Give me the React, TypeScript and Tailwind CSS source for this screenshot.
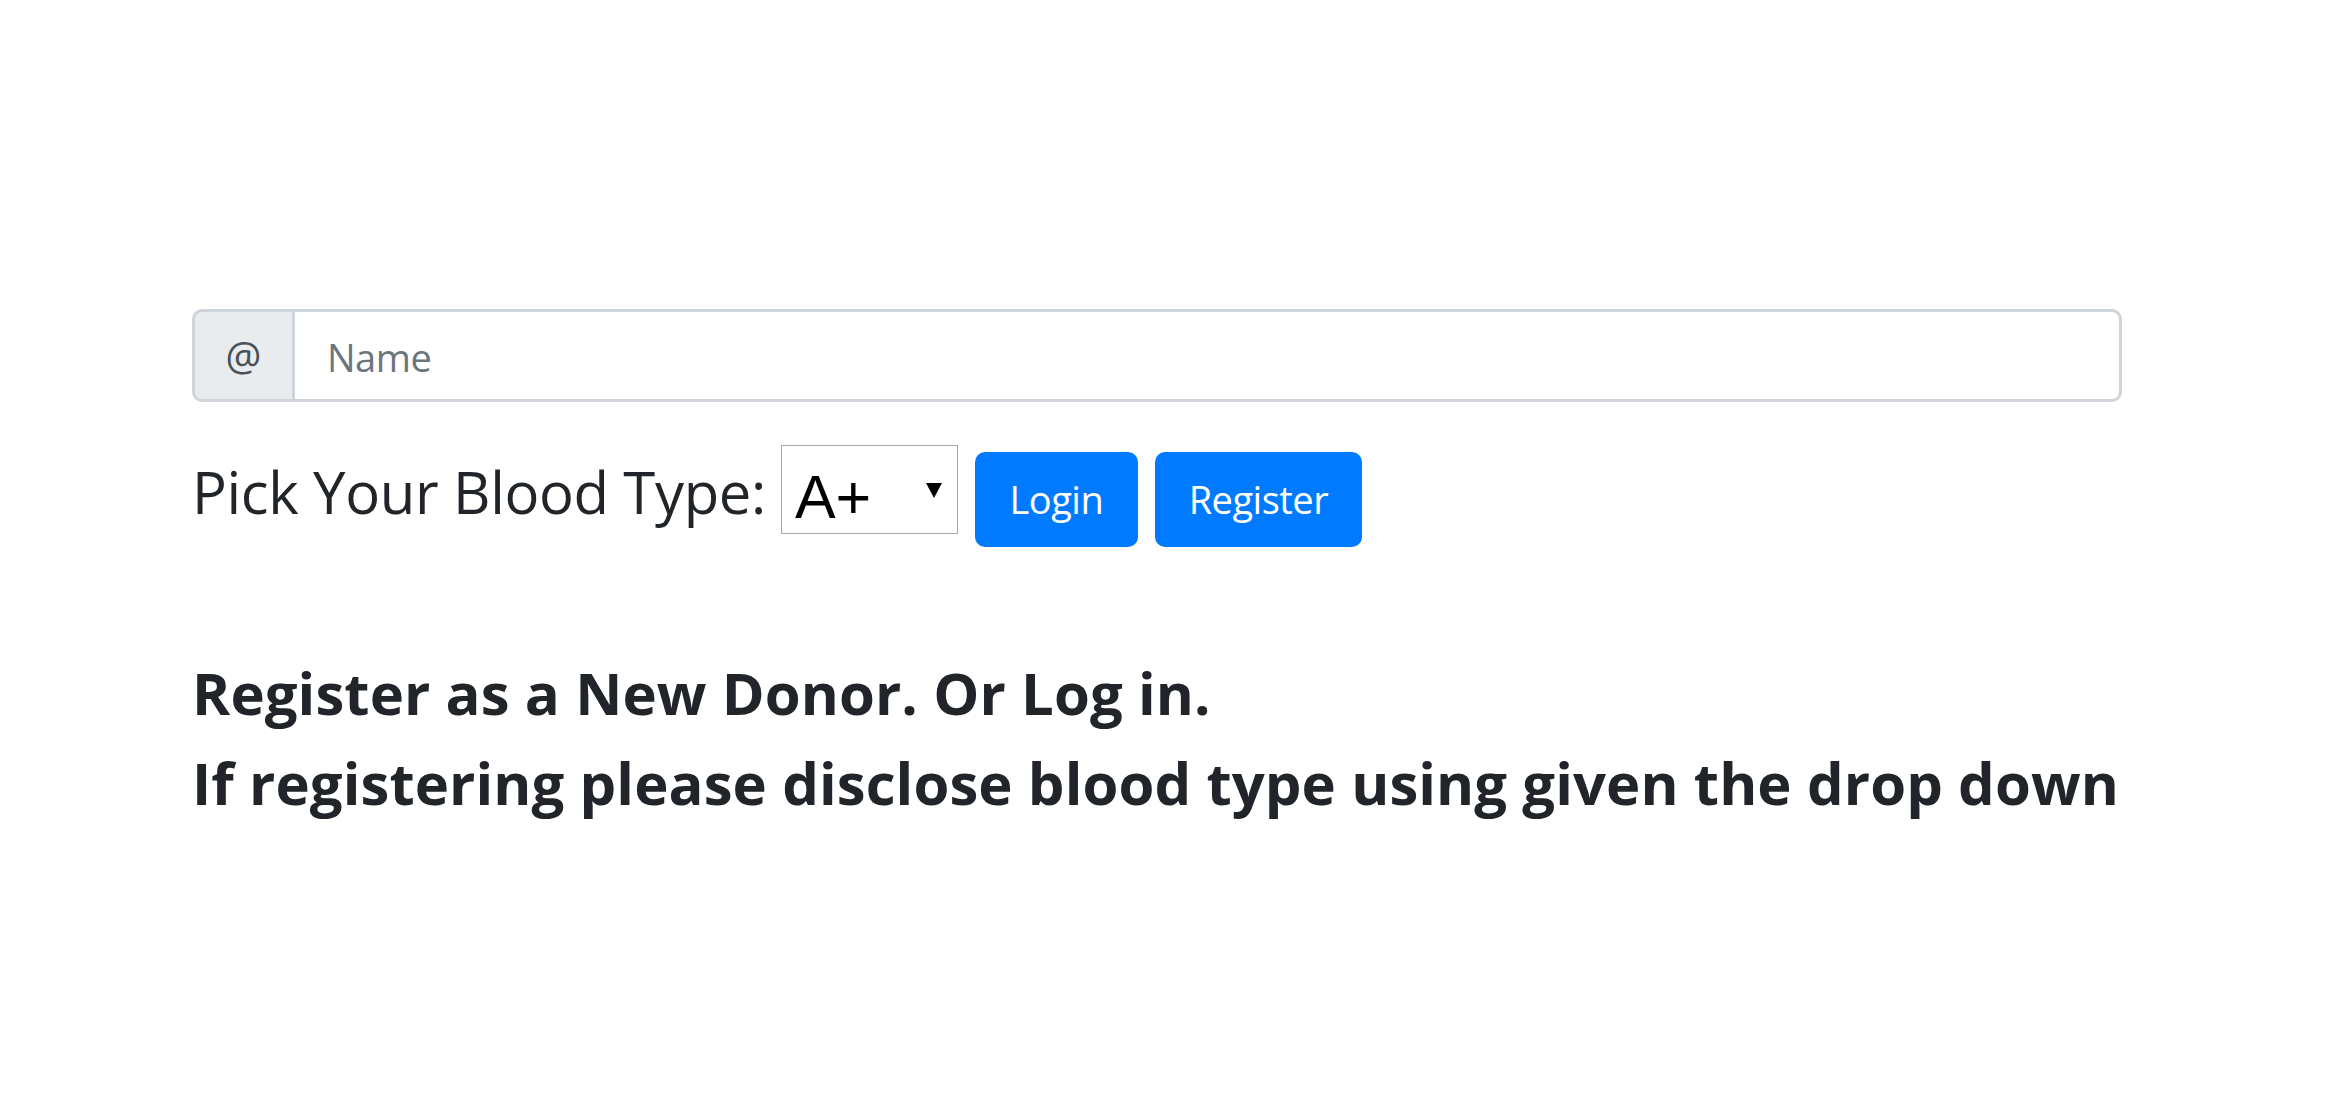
import React from "react";

export default function App() {
  const font = { fontFamily: '"Open Sans", "Noto Sans", sans-serif' };
  return (
    <div className="min-h-[1103px] bg-white pt-[309px] pl-[192px]" style={font}>
      <div className="w-[1930px]">
        <div className="flex h-[93px] w-full">
          <div className="flex w-[103px] items-center justify-center rounded-l-[10px] border-[3px] border-[#ced4da] bg-[#e9ecef] text-[40px] text-[#495057]">
            @
          </div>
          <input
            className="h-full flex-1 rounded-r-[10px] border-[3px] border-l-0 border-[#ced4da] bg-white pl-[32px] pr-[30px] pt-[3px] text-[38px] tracking-[-0.5px] text-[#495057] outline-none placeholder:text-[#6c757d]"
            placeholder="Name"
          />
        </div>
        <div className="mt-[43px] flex items-start">
          <label className="mt-[2px] whitespace-nowrap text-[58px] font-normal leading-[89px] tracking-[-0.35px] text-[#212529]">
            Pick Your Blood Type:
          </label>
          <div className="relative ml-[15px]">
            <select
              className="h-[89px] w-[177px] appearance-none rounded-none border border-[#a9a9a9] bg-white pl-[13px] pt-[6px] text-[61px] text-black outline-none"
              style={{ fontFamily: '"Liberation Sans", Arial, sans-serif' }}
              defaultValue="A+"
            >
              <option>A+</option>
              <option>A-</option>
              <option>B+</option>
              <option>B-</option>
              <option>AB+</option>
              <option>AB-</option>
              <option>O+</option>
              <option>O-</option>
            </select>
            <svg className="pointer-events-none absolute left-[145px] top-[38px]" width="16" height="15" viewBox="0 0 16 15">
              <polygon points="0,0 16,0 8,15" fill="#000" />
            </svg>
          </div>
          <button className="ml-[17px] mt-[7px] flex h-[95px] w-[163px] items-center justify-center rounded-[10px] bg-[#007bff] text-[38px] tracking-[-0.5px] text-white">
            Login
          </button>
          <button className="ml-[17px] mt-[7px] flex h-[95px] w-[207px] items-center justify-center rounded-[10px] bg-[#007bff] text-[38px] tracking-[-0.5px] text-white">
            Register
          </button>
        </div>
        <div className="mt-[101px]">
          <h4 className="whitespace-nowrap text-[58px] font-bold leading-[90px] tracking-[0.1px] text-[#212529]">
            Register as a New Donor. Or Log in.
          </h4>
          <h4 className="whitespace-nowrap text-[58px] font-bold leading-[90px] tracking-[0.1px] text-[#212529]">
            If registering please disclose blood type using given the drop down
          </h4>
        </div>
      </div>
    </div>
  );
}
